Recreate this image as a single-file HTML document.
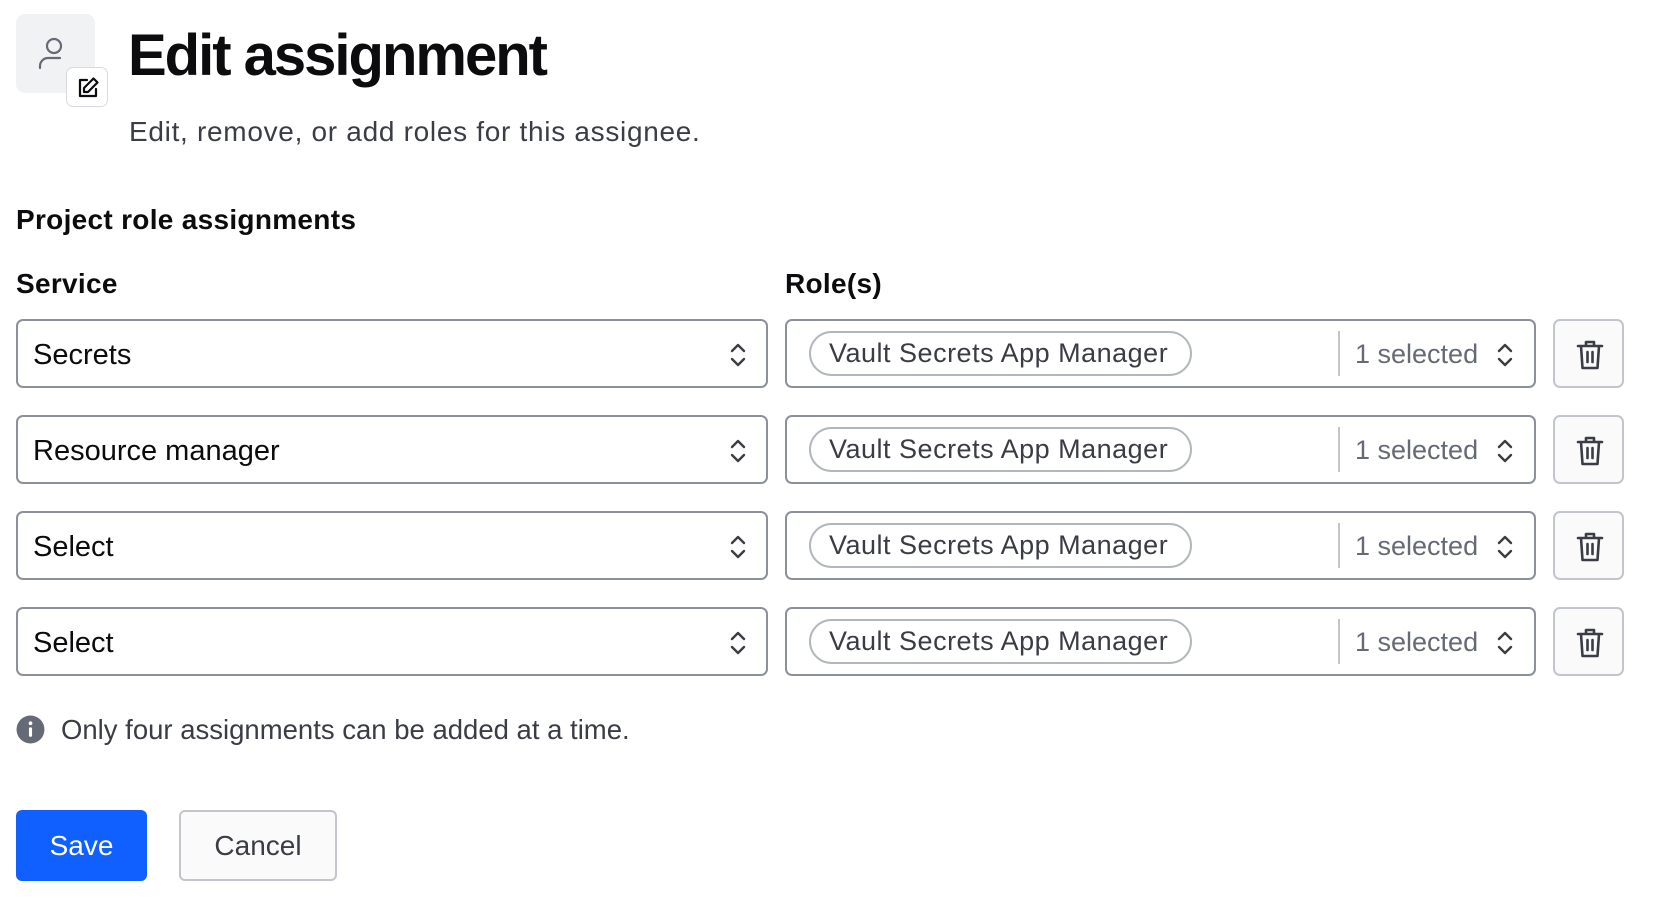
<!DOCTYPE html>
<html><head><meta charset="utf-8"><style>
*{box-sizing:border-box;margin:0;padding:0}
body{width:1672px;height:898px;background:#fff;font-family:"Liberation Sans",sans-serif;color:#0c0c0e;position:relative;overflow:hidden}
.abs{position:absolute}
.iconbox{left:16px;top:14px;width:79px;height:79px;border-radius:9px;background:#f1f2f3}
.badge{left:66px;top:67px;width:42px;height:40px;border-radius:7px;background:#fff;border:1px solid #d9dadd}
h1{position:absolute;left:128px;top:21px;font-size:58px;font-weight:bold;letter-spacing:-2px;line-height:70px}
.sub{left:129px;top:116px;font-size:28px;letter-spacing:0.7px;color:#3b3d45}
.sec{left:16px;top:204px;font-size:28px;letter-spacing:0.3px;font-weight:bold}
.lab{top:268px;font-size:28px;letter-spacing:0.3px;font-weight:bold}
.sel{left:16px;width:752px;height:69px;border:2px solid #8c909c;border-radius:7px;font-size:29px;line-height:68px;padding-left:15px}
.role{left:785px;width:751px;height:69px;border:2px solid #8c909c;border-radius:7px}
.pill{position:absolute;left:22px;top:10px;width:383px;height:45px;border:2px solid #b2b6bd;border-radius:23px;font-size:27px;letter-spacing:0.5px;line-height:41px;padding-left:18px;color:#3b3d45}
.div{position:absolute;left:551px;top:10px;width:2px;height:45px;background:#c2c5cb}
.cnt{position:absolute;left:568px;top:1px;line-height:65px;font-size:27px;color:#656a76}
.trash{left:1553px;width:71px;height:69px;border:2px solid #c2c5cb;border-radius:7px;background:#fafafa}
svg{position:absolute}
.info{left:61px;top:714px;font-size:27.5px;color:#3b3d45}
.save{left:16px;top:810px;width:131px;height:71px;background:#1060ff;border-radius:6px;color:#fff;font-size:28px;line-height:71px;text-align:center}
.cancel{left:179px;top:810px;width:158px;height:71px;background:#fafafa;border:2px solid #c2c5cb;border-radius:6px;color:#3b3d45;font-size:28px;line-height:67px;text-align:center}
</style></head><body>
<div class="abs iconbox"><svg style="left:20px;top:20px" width="36" height="40" viewBox="0 0 36 40" fill="none" stroke="#656a76" stroke-width="2.2" stroke-linecap="round"><circle cx="18" cy="12" r="7"/><path d="M4 34v-2a8 8 0 0 1 8-8h12"/></svg></div>
<div class="abs badge"><svg style="left:9px;top:8px" width="24" height="24" viewBox="0 0 24 24" fill="none" stroke="#0c0c0e" stroke-width="2.2" stroke-linejoin="round" stroke-linecap="round"><path d="M11 4H4v16h16v-7"/><path d="M17.5 2.5l4 4L12 16H8v-4z"/></svg></div>
<h1>Edit assignment</h1>
<div class="abs sub">Edit, remove, or add roles for this assignee.</div>
<div class="abs sec">Project role assignments</div>
<div class="abs lab" style="left:16px">Service</div>
<div class="abs lab" style="left:785px">Role(s)</div>

<div class="abs sel" style="top:319px">Secrets<svg style="left:710px;top:21px" width="20" height="26" viewBox="0 0 20 26" fill="none" stroke="#3b3d45" stroke-width="2.4" stroke-linecap="round" stroke-linejoin="round"><path d="M4 9l6-6 6 6M4 17l6 6 6-6"/></svg></div>
<div class="abs sel" style="top:415px">Resource manager<svg style="left:710px;top:21px" width="20" height="26" viewBox="0 0 20 26" fill="none" stroke="#3b3d45" stroke-width="2.4" stroke-linecap="round" stroke-linejoin="round"><path d="M4 9l6-6 6 6M4 17l6 6 6-6"/></svg></div>
<div class="abs sel" style="top:511px">Select<svg style="left:710px;top:21px" width="20" height="26" viewBox="0 0 20 26" fill="none" stroke="#3b3d45" stroke-width="2.4" stroke-linecap="round" stroke-linejoin="round"><path d="M4 9l6-6 6 6M4 17l6 6 6-6"/></svg></div>
<div class="abs sel" style="top:607px">Select<svg style="left:710px;top:21px" width="20" height="26" viewBox="0 0 20 26" fill="none" stroke="#3b3d45" stroke-width="2.4" stroke-linecap="round" stroke-linejoin="round"><path d="M4 9l6-6 6 6M4 17l6 6 6-6"/></svg></div>

<div class="abs role" style="top:319px"><div class="pill">Vault Secrets App Manager</div><div class="div"></div><div class="cnt">1 selected</div><svg style="left:708px;top:21px" width="20" height="26" viewBox="0 0 20 26" fill="none" stroke="#3b3d45" stroke-width="2.4" stroke-linecap="round" stroke-linejoin="round"><path d="M4 9l6-6 6 6M4 17l6 6 6-6"/></svg></div>
<div class="abs role" style="top:415px"><div class="pill">Vault Secrets App Manager</div><div class="div"></div><div class="cnt">1 selected</div><svg style="left:708px;top:21px" width="20" height="26" viewBox="0 0 20 26" fill="none" stroke="#3b3d45" stroke-width="2.4" stroke-linecap="round" stroke-linejoin="round"><path d="M4 9l6-6 6 6M4 17l6 6 6-6"/></svg></div>
<div class="abs role" style="top:511px"><div class="pill">Vault Secrets App Manager</div><div class="div"></div><div class="cnt">1 selected</div><svg style="left:708px;top:21px" width="20" height="26" viewBox="0 0 20 26" fill="none" stroke="#3b3d45" stroke-width="2.4" stroke-linecap="round" stroke-linejoin="round"><path d="M4 9l6-6 6 6M4 17l6 6 6-6"/></svg></div>
<div class="abs role" style="top:607px"><div class="pill">Vault Secrets App Manager</div><div class="div"></div><div class="cnt">1 selected</div><svg style="left:708px;top:21px" width="20" height="26" viewBox="0 0 20 26" fill="none" stroke="#3b3d45" stroke-width="2.4" stroke-linecap="round" stroke-linejoin="round"><path d="M4 9l6-6 6 6M4 17l6 6 6-6"/></svg></div>

<div class="abs trash" style="top:319px"><svg style="left:20px;top:18px" width="30" height="32" viewBox="0 0 30 32" fill="none" stroke="#3b3d45" stroke-width="2.6" stroke-linecap="round" stroke-linejoin="round"><path d="M3 7h24M11 7V3h8v4M6 7l1.5 22h15L24 7M12.5 13v10M17.5 13v10"/></svg></div>
<div class="abs trash" style="top:415px"><svg style="left:20px;top:18px" width="30" height="32" viewBox="0 0 30 32" fill="none" stroke="#3b3d45" stroke-width="2.6" stroke-linecap="round" stroke-linejoin="round"><path d="M3 7h24M11 7V3h8v4M6 7l1.5 22h15L24 7M12.5 13v10M17.5 13v10"/></svg></div>
<div class="abs trash" style="top:511px"><svg style="left:20px;top:18px" width="30" height="32" viewBox="0 0 30 32" fill="none" stroke="#3b3d45" stroke-width="2.6" stroke-linecap="round" stroke-linejoin="round"><path d="M3 7h24M11 7V3h8v4M6 7l1.5 22h15L24 7M12.5 13v10M17.5 13v10"/></svg></div>
<div class="abs trash" style="top:607px"><svg style="left:20px;top:18px" width="30" height="32" viewBox="0 0 30 32" fill="none" stroke="#3b3d45" stroke-width="2.6" stroke-linecap="round" stroke-linejoin="round"><path d="M3 7h24M11 7V3h8v4M6 7l1.5 22h15L24 7M12.5 13v10M17.5 13v10"/></svg></div>

<svg style="left:16px;top:715px" width="29" height="29" viewBox="0 0 28 28"><circle cx="14" cy="14" r="13.5" fill="#656a76"/><rect x="12.5" y="12" width="3" height="9" rx="1" fill="#fff"/><circle cx="14" cy="8" r="1.8" fill="#fff"/></svg>
<div class="abs info">Only four assignments can be added at a time.</div>
<div class="abs save">Save</div>
<div class="abs cancel">Cancel</div>
</body></html>
